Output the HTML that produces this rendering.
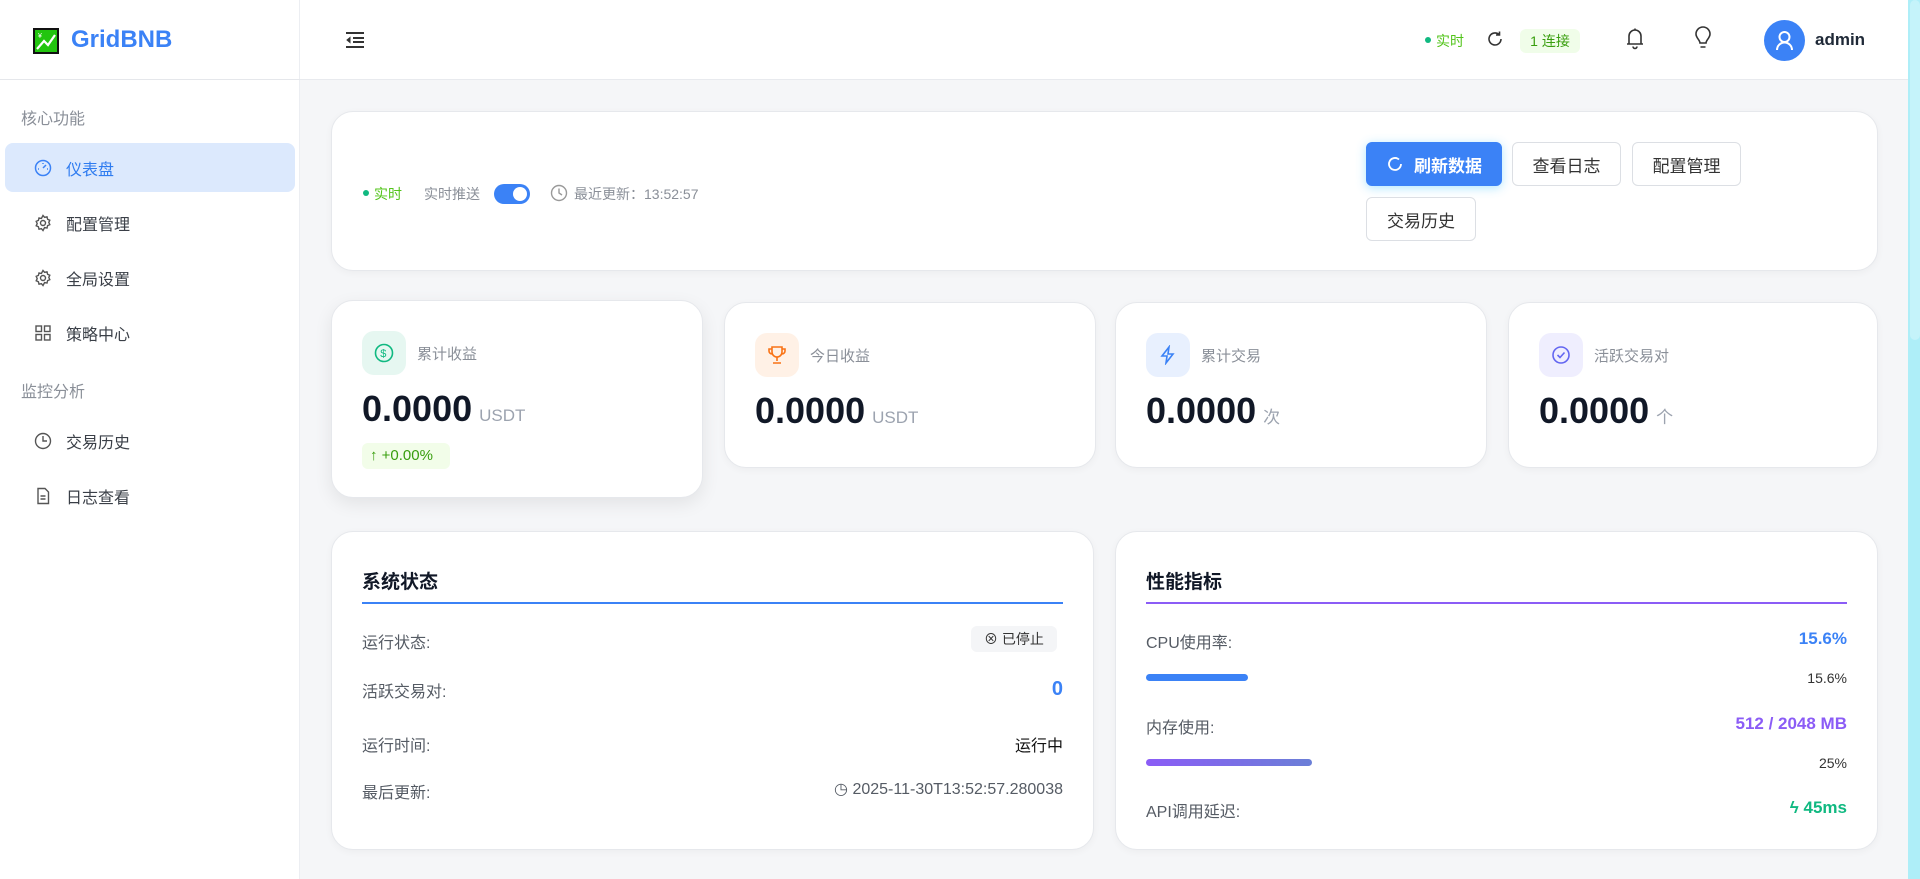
<!DOCTYPE html>
<html><head><meta charset="utf-8"><style>
*{box-sizing:border-box;margin:0;padding:0}
body{width:1920px;height:879px;overflow:hidden;background:#f5f6f8;font-family:"Liberation Sans","Noto Sans CJK SC",sans-serif;position:relative;color:#1f2937}
.a{position:absolute}
.side{left:0;top:0;width:300px;height:879px;background:#fff;border-right:1px solid #eceef2}
.hdr{left:300px;top:0;width:1608px;height:80px;background:#fff;border-bottom:1px solid #e8eaee}
.sec{left:21px;font-size:16px;color:#8a8f98}
.item{left:5px;width:290px;height:49px;border-radius:8px;font-size:16px;color:#3a3f47;display:flex;align-items:center;padding-left:61px}
.item svg{position:absolute;left:29px;top:16px}
.card{background:#fff;border:1px solid #e6e8ec;border-radius:22px;box-shadow:0 2px 8px rgba(0,0,0,.04)}
.btn{height:44px;border:1px solid #dcdfe4;border-radius:6px;background:#fff;font-size:17px;color:#333;display:flex;align-items:center;justify-content:center}
.stat{top:302px;width:372px;height:166px}
.ib{left:30px;top:30px;width:44px;height:44px;border-radius:12px;display:flex;align-items:center;justify-content:center}
.lbl{left:85px;top:42px;font-size:15px;color:#8a8f98}
.val{left:30px;top:87px;font-size:36px;font-weight:bold;color:#111827;white-space:nowrap}
.val span{font-size:17px;font-weight:normal;color:#9ca3af;margin-left:7px}
.row{font-size:16px;color:#555b64}
.r{right:30px;text-align:right;white-space:nowrap}
</style></head><body>
<div class="a side">
 <div class="a" style="left:0;top:79px;width:300px;border-top:1px solid #e5e7eb"></div>
 <svg class="a" style="left:33px;top:28px" width="26" height="26" viewBox="0 0 26 26"><rect x="1" y="1" width="24" height="24" fill="#22c50f" stroke="#111" stroke-width="2"/><path d="M4 21l7-8 4 4 7-10" stroke="#fff" stroke-width="2.2" fill="none"/><text x="5" y="10" font-size="7" fill="#fff">¥</text></svg>
 <div class="a" style="left:71px;top:26px;font-size:24px;font-weight:bold;color:#3b82f6">GridBNB</div>
 <div class="a sec" style="top:105px">核心功能</div>
 <div class="a item" style="top:143px;background:#dce9fd;color:#2f7cf0"><svg width="18" height="18" viewBox="0 0 18 18" fill="none" stroke="#3b82f6" stroke-width="1.5"><circle cx="9" cy="9" r="7.5"/><path d="M9 9l3-3M4 10h1M13 10h1M9 4v1"/></svg>仪表盘</div>
 <div class="a item" style="top:198px"><svg width="18" height="18" viewBox="0 0 18 18" fill="none" stroke="#555" stroke-width="1.4"><circle cx="9" cy="9" r="2.5"/><path d="M9 1.5l1.6 1.8 2.4-.5.6 2.4 2.2 1-1 2.2 1 2.2-2.2 1-.6 2.4-2.4-.5L9 16.5l-1.6-1.8-2.4.5-.6-2.4-2.2-1 1-2.2-1-2.2 2.2-1 .6-2.4 2.4.5z"/></svg>配置管理</div>
 <div class="a item" style="top:253px"><svg width="18" height="18" viewBox="0 0 18 18" fill="none" stroke="#555" stroke-width="1.4"><circle cx="9" cy="9" r="2.5"/><path d="M9 1.5l1.6 1.8 2.4-.5.6 2.4 2.2 1-1 2.2 1 2.2-2.2 1-.6 2.4-2.4-.5L9 16.5l-1.6-1.8-2.4.5-.6-2.4-2.2-1 1-2.2-1-2.2 2.2-1 .6-2.4 2.4.5z"/></svg>全局设置</div>
 <div class="a item" style="top:308px"><svg width="18" height="18" viewBox="0 0 18 18" fill="none" stroke="#555" stroke-width="1.4"><rect x="2" y="2" width="5.5" height="5.5"/><rect x="10.5" y="2" width="5.5" height="5.5"/><rect x="2" y="10.5" width="5.5" height="5.5"/><rect x="10.5" y="10.5" width="5.5" height="5.5"/></svg>策略中心</div>
 <div class="a sec" style="top:378px">监控分析</div>
 <div class="a item" style="top:416px"><svg width="18" height="18" viewBox="0 0 18 18" fill="none" stroke="#555" stroke-width="1.4"><circle cx="9" cy="9" r="7.5"/><path d="M9 4v5h4"/></svg>交易历史</div>
 <div class="a item" style="top:471px"><svg width="18" height="18" viewBox="0 0 18 18" fill="none" stroke="#555" stroke-width="1.4"><path d="M4 1.5h7l3.5 3.5v11.5H4z M6.5 9h5M6.5 12h5"/></svg>日志查看</div>
</div>
<div class="a hdr">
 <svg class="a" style="left:45px;top:31px" width="20" height="18" viewBox="0 0 20 18" stroke="#333" stroke-width="2" fill="none"><path d="M1 2h18M8 7h11M8 11h11M1 16h18"/><path d="M5 6.5L2 9l3 2.5z" fill="#333" stroke-width="1"/></svg>
 <div class="a" style="left:1125px;top:37px;width:6px;height:6px;border-radius:50%;background:#10b981"></div>
 <div class="a" style="left:1136px;top:31px;font-size:14px;color:#52c41a">实时</div>
 <svg class="a" style="left:1186px;top:30px" width="18" height="18" viewBox="0 0 18 18" fill="none" stroke="#333" stroke-width="1.6"><path d="M15 9a6 6 0 1 1-2-4.5M13.5 1.5v3.5H10"/></svg>
 <div class="a" style="left:1220px;top:29px;width:60px;height:24px;border-radius:6px;background:#f0fde9;color:#389e0d;font-size:14px;text-align:center;line-height:24px">1 连接</div>
 <svg class="a" style="left:1325px;top:27px" width="20" height="23" viewBox="0 0 20 23" fill="none" stroke="#333" stroke-width="1.6"><path d="M4 17V9a6 6 0 0 1 12 0v8h2H2zM10 1.5v1.5M8 19.5a2 2 0 0 0 4 0"/></svg>
 <svg class="a" style="left:1394px;top:26px" width="18" height="24" viewBox="0 0 18 24" fill="none" stroke="#333" stroke-width="1.6"><path d="M6 17c0-3-4-5-4-9a7 7 0 0 1 14 0c0 4-4 6-4 9zM6.5 21h5"/></svg>
 <div class="a" style="left:1464px;top:20px;width:41px;height:41px;border-radius:50%;background:#3b82f6"></div>
 <svg class="a" style="left:1472px;top:28px" width="25" height="25" viewBox="0 0 25 25" fill="none" stroke="#fff" stroke-width="2"><circle cx="12.5" cy="9" r="5"/><path d="M5 22a7.5 7.5 0 0 1 15 0"/></svg>
 <div class="a" style="left:1515px;top:30px;font-size:17px;font-weight:bold;color:#1f2937">admin</div>
</div>
<div class="a" style="left:1908px;top:0;width:12px;height:879px;background:#aeeef8"></div>
<div class="a" style="left:1910px;top:0;width:10px;height:340px;background:#c5f3fa;border-radius:5px"></div>

<div class="a card" style="left:331px;top:111px;width:1547px;height:160px">
 <div class="a" style="left:31px;top:78px;width:6px;height:6px;border-radius:50%;background:#10b981"></div>
 <div class="a" style="left:42px;top:72px;font-size:14px;color:#52c41a">实时</div>
 <div class="a" style="left:92px;top:72px;font-size:14px;color:#8a8f98">实时推送</div>
 <div class="a" style="left:162px;top:72px;width:36px;height:20px;border-radius:10px;background:#3b82f6"><div class="a" style="right:3px;top:3px;width:14px;height:14px;border-radius:50%;background:#fff"></div></div>
 <svg class="a" style="left:218px;top:72px" width="18" height="18" viewBox="0 0 18 18" fill="none" stroke="#999" stroke-width="1.4"><circle cx="9" cy="9" r="7.5"/><path d="M9 4.5V9l3 2"/></svg>
 <div class="a" style="left:242px;top:72px;font-size:14px;color:#8a8f98">最近更新：13:52:57</div>
 <div class="a btn" style="left:1034px;top:30px;width:136px;background:#3b82f6;border-color:#3b82f6;color:#fff;font-weight:bold;box-shadow:0 2px 10px rgba(80,200,255,.45)"><svg width="18" height="18" viewBox="0 0 18 18" fill="none" stroke="#fff" stroke-width="1.8" style="margin-right:10px"><path d="M15 9a6 6 0 1 1-2-4.5"/></svg>刷新数据</div>
 <div class="a btn" style="left:1180px;top:30px;width:109px">查看日志</div>
 <div class="a btn" style="left:1300px;top:30px;width:109px">配置管理</div>
 <div class="a btn" style="left:1034px;top:85px;width:110px">交易历史</div>
</div>

<div class="a card stat" style="left:331px;top:300px;height:198px;box-shadow:0 6px 18px rgba(0,0,0,.08)">
 <div class="a ib" style="background:#e6f7f1"><svg width="22" height="22" viewBox="0 0 22 22" fill="none" stroke="#10b981" stroke-width="1.6"><circle cx="11" cy="11" r="8.5"/><text x="7.3" y="15" font-size="11" fill="#10b981" stroke="none">$</text></svg></div>
 <div class="a lbl">累计收益</div>
 <div class="a val">0.0000<span>USDT</span></div>
 <div class="a" style="left:30px;top:142px;width:88px;height:26px;border-radius:6px;background:#f2fde9;color:#389e0d;font-size:15px;line-height:26px;padding-left:8px">↑ +0.00%</div>
</div>
<div class="a card stat" style="left:724px">
 <div class="a ib" style="background:#fff1e6"><svg width="20" height="20" viewBox="0 0 20 20" fill="none" stroke="#f97316" stroke-width="1.6"><path d="M5 2h10v5a5 5 0 0 1-10 0zM5 4H2v2a3 3 0 0 0 3 3M15 4h3v2a3 3 0 0 1-3 3M10 12v4M6 18h8"/></svg></div>
 <div class="a lbl">今日收益</div>
 <div class="a val">0.0000<span>USDT</span></div>
</div>
<div class="a card stat" style="left:1115px">
 <div class="a ib" style="background:#e8f0fe"><svg width="20" height="20" viewBox="0 0 20 20" fill="none" stroke="#3b82f6" stroke-width="1.6"><path d="M11 2L4 11h5l-1 7 7-9h-5z"/></svg></div>
 <div class="a lbl">累计交易</div>
 <div class="a val">0.0000<span>次</span></div>
</div>
<div class="a card stat" style="left:1508px;width:370px">
 <div class="a ib" style="background:#efeefe"><svg width="20" height="20" viewBox="0 0 20 20" fill="none" stroke="#6366f1" stroke-width="1.6"><circle cx="10" cy="10" r="8"/><path d="M6.5 10l2.5 2.5 4.5-5"/></svg></div>
 <div class="a lbl">活跃交易对</div>
 <div class="a val">0.0000<span>个</span></div>
</div>

<div class="a card" style="left:331px;top:531px;width:763px;height:319px">
 <div class="a" style="left:30px;top:35px;font-size:19px;font-weight:bold;color:#111827">系统状态</div>
 <div class="a" style="left:30px;top:70px;width:701px;height:2px;background:#3b82f6"></div>
 <div class="a row" style="left:30px;top:97px">运行状态:</div>
 <div class="a r" style="top:94px;right:36px;width:86px;height:26px;border-radius:6px;background:#f4f5f7;font-size:14px;line-height:26px;text-align:center;color:#333">⊗ 已停止</div>
 <div class="a row" style="left:30px;top:146px">活跃交易对:</div>
 <div class="a r" style="top:146px;font-size:20px;color:#3b82f6;font-weight:bold">0</div>
 <div class="a row" style="left:30px;top:200px">运行时间:</div>
 <div class="a r row" style="top:200px;color:#111">运行中</div>
 <div class="a row" style="left:30px;top:247px">最后更新:</div>
 <div class="a r row" style="top:247px">◷ 2025-11-30T13:52:57.280038</div>
</div>
<div class="a card" style="left:1115px;top:531px;width:763px;height:319px">
 <div class="a" style="left:30px;top:35px;font-size:19px;font-weight:bold;color:#111827">性能指标</div>
 <div class="a" style="left:30px;top:70px;width:701px;height:2px;background:#8b5cf6"></div>
 <div class="a row" style="left:30px;top:97px">CPU使用率:</div>
 <div class="a r" style="top:97px;font-size:17px;font-weight:bold;color:#3b82f6">15.6%</div>
 <div class="a" style="left:30px;top:142px;width:102px;height:7px;border-radius:4px;background:#3b82f6"></div>
 <div class="a r" style="top:138px;font-size:14px;color:#333">15.6%</div>
 <div class="a row" style="left:30px;top:182px">内存使用:</div>
 <div class="a r" style="top:182px;font-size:17px;font-weight:bold;color:#8b5cf6">512 / 2048 MB</div>
 <div class="a" style="left:30px;top:227px;width:166px;height:7px;border-radius:4px;background:linear-gradient(90deg,#8b5cf6,#6b7fd7)"></div>
 <div class="a r" style="top:223px;font-size:14px;color:#333">25%</div>
 <div class="a row" style="left:30px;top:266px">API调用延迟:</div>
 <div class="a r" style="top:266px;font-size:17px;font-weight:bold;color:#10b981">ϟ 45ms</div>
</div>
</body></html>
